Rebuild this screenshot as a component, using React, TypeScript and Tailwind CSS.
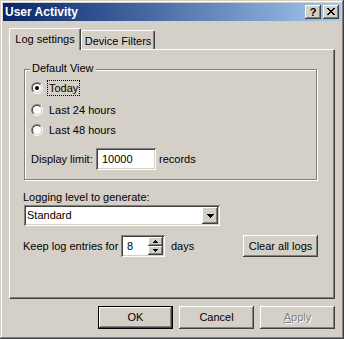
const raised = "shadow-[inset_-1px_-1px_#404040,inset_1px_1px_#fff,inset_-2px_-2px_#808080]";
const sunken = "shadow-[inset_1px_1px_#808080,inset_-1px_-1px_#fff,inset_2px_2px_#404040,inset_-2px_-2px_#d4d0c8]";

function Radio({ checked }: { checked?: boolean }) {
  return (
    <span className="w-[12px] h-[12px] shrink-0 rounded-full border border-t-[#808080] border-l-[#808080] border-r-white border-b-white flex">
      <span className="flex-1 rounded-full border border-t-[#404040] border-l-[#404040] border-r-[#d4d0c8] border-b-[#d4d0c8] bg-white flex items-center justify-center">
        {checked && <span className="w-[4px] h-[4px] rounded-full bg-black" />}
      </span>
    </span>
  );
}

function Arrow({ dir }: { dir: "up" | "down" }) {
  return (
    <svg width="5" height="3" viewBox="0 0 5 3" shapeRendering="crispEdges">
      {dir === "up" ? (
        <path d="M2 0h1v1H2z M1 1h3v1H1z M0 2h5v1H0z" fill="#000" />
      ) : (
        <path d="M0 0h5v1H0z M1 1h3v1H1z M2 2h1v1H2z" fill="#000" />
      )}
    </svg>
  );
}

function TitleBar() {
  return (
    <div className="h-[18px] bg-linear-to-r from-[#0a246a] to-[#a6caf0] flex items-center pl-[2px] pr-[2px]">
      <span className="text-white font-bold text-[12px] leading-[14px]">User Activity</span>
      <div className="ml-auto flex gap-[2px]">
        <div className={`w-[16px] h-[14px] bg-[#d4d0c8] ${raised} flex items-center justify-center text-[11px] font-bold leading-none pt-[1px]`}>
          ?
        </div>
        <div className={`w-[16px] h-[14px] bg-[#d4d0c8] ${raised} flex items-center justify-center pb-[1px]`}>
          <svg width="8" height="7" viewBox="0 0 8 7" shapeRendering="crispEdges">
            <path
              d="M0 0h2v1H0z M6 0h2v1H6z M1 1h2v1H1z M5 1h2v1H5z M2 2h4v1H2z M3 3h2v1H3z M2 4h4v1H2z M1 5h2v1H1z M5 5h2v1H5z M0 6h2v1H0z M6 6h2v1H6z"
              fill="#000"
            />
          </svg>
        </div>
      </div>
    </div>
  );
}

export default function App() {
  return (
    <div className="w-[344px] h-[339px] bg-[#d4d0c8] p-[3px] flex flex-col shadow-[inset_-1px_-1px_#404040,inset_1px_1px_#d4d0c8,inset_-2px_-2px_#808080,inset_2px_2px_#fff] font-['Liberation_Sans',Arial,sans-serif] text-[11px] leading-[13px] text-black select-none">
      <TitleBar />

      {/* tabs */}
      <div className="mt-[7px] ml-[6px] flex items-end h-[21px]">
        <div className="relative z-10 w-[72px] h-[22px] -mb-[1px] bg-[#d4d0c8] border-t border-l border-white border-r border-r-[#404040] rounded-t-[2px] shadow-[inset_-1px_0_#808080] flex items-center justify-center pb-[1px]">
          Log settings
        </div>
        <div className="w-[74px] h-[19px] border-t border-l border-white border-r border-r-[#404040] rounded-t-[2px] shadow-[inset_-1px_0_#808080] flex items-center justify-center pt-[2px]">
          Device Filters
        </div>
      </div>

      {/* panel */}
      <div className="ml-[6px] w-[326px] h-[250px] border-t border-l border-white border-r border-b border-r-[#404040] border-b-[#404040] shadow-[inset_-1px_-1px_#808080] flex flex-col">
        <div className="relative mt-[19px] ml-[14px] w-[293px] h-[111px] border border-[#808080] shadow-[inset_1px_1px_#fff,1px_1px_#fff] flex flex-col">
          <span className="absolute left-[5px] -top-[8px] px-[2px] bg-[#d4d0c8]">Default View</span>

          <div className="mt-[10px] pl-[6px] h-[16px] flex items-center">
            <Radio checked />
            <span className="ml-[4px] h-[16px] px-[1px] border border-dotted border-black flex items-center">Today</span>
          </div>
          <div className="mt-[6px] pl-[6px] h-[16px] flex items-center">
            <Radio />
            <span className="ml-[6px]">Last 24 hours</span>
          </div>
          <div className="mt-[4px] pl-[6px] h-[16px] flex items-center">
            <Radio />
            <span className="ml-[6px]">Last 48 hours</span>
          </div>
          <div className="mt-[10px] pl-[6px] h-[22px] flex items-center">
            <span className="w-[65px]">Display limit:</span>
            <div className={`w-[60px] h-[22px] bg-white ${sunken} flex items-center pl-[6px]`}>10000</div>
            <span className="ml-[3px]">records</span>
          </div>
        </div>

        <div className="mt-[11px] ml-[13px]">Logging level to generate:</div>
        <div className={`mt-[1px] ml-[14px] w-[196px] h-[21px] bg-white ${sunken} flex items-center pl-[3px]`}>
          <span>Standard</span>
          <div className={`ml-auto mr-[2px] w-[16px] h-[17px] bg-[#d4d0c8] ${raised} flex items-center justify-center`}>
            <svg width="7" height="4" viewBox="0 0 7 4" shapeRendering="crispEdges">
              <path d="M0 0h7v1H0z M1 1h5v1H1z M2 2h3v1H2z M3 3h1v1H3z" fill="#000" />
            </svg>
          </div>
        </div>

        <div className="mt-[9px] ml-[13px] w-[295px] h-[22px] flex items-center">
          <span className="w-[98px]">Keep log entries for</span>
          <div className={`w-[44px] h-[22px] bg-white ${sunken} flex items-center pl-[6px]`}>
            <span>8</span>
            <div className="ml-auto mr-[2px] flex flex-col">
              <div className={`w-[15px] h-[9px] bg-[#d4d0c8] ${raised} flex items-center justify-center`}>
                <Arrow dir="up" />
              </div>
              <div className={`w-[15px] h-[9px] bg-[#d4d0c8] ${raised} flex items-center justify-center`}>
                <Arrow dir="down" />
              </div>
            </div>
          </div>
          <span className="ml-[6px]">days</span>
          <div className={`ml-auto w-[75px] h-[22px] ${raised} flex items-center justify-center`}>Clear all logs</div>
        </div>
      </div>

      {/* dialog buttons */}
      <div className="mt-[7px] pr-[6px] flex justify-end gap-[6px]">
        <div className="w-[75px] h-[23px] shadow-[inset_0_0_0_1px_#000,inset_-2px_-2px_#404040,inset_2px_2px_#fff,inset_-3px_-3px_#808080] flex items-center justify-center">
          OK
        </div>
        <div className={`w-[75px] h-[23px] ${raised} flex items-center justify-center`}>Cancel</div>
        <div className={`w-[75px] h-[23px] ${raised} flex items-center justify-center text-[#808080] [text-shadow:1px_1px_0_#fff]`}>
          <span>
            <u>A</u>pply
          </span>
        </div>
      </div>
    </div>
  );
}
